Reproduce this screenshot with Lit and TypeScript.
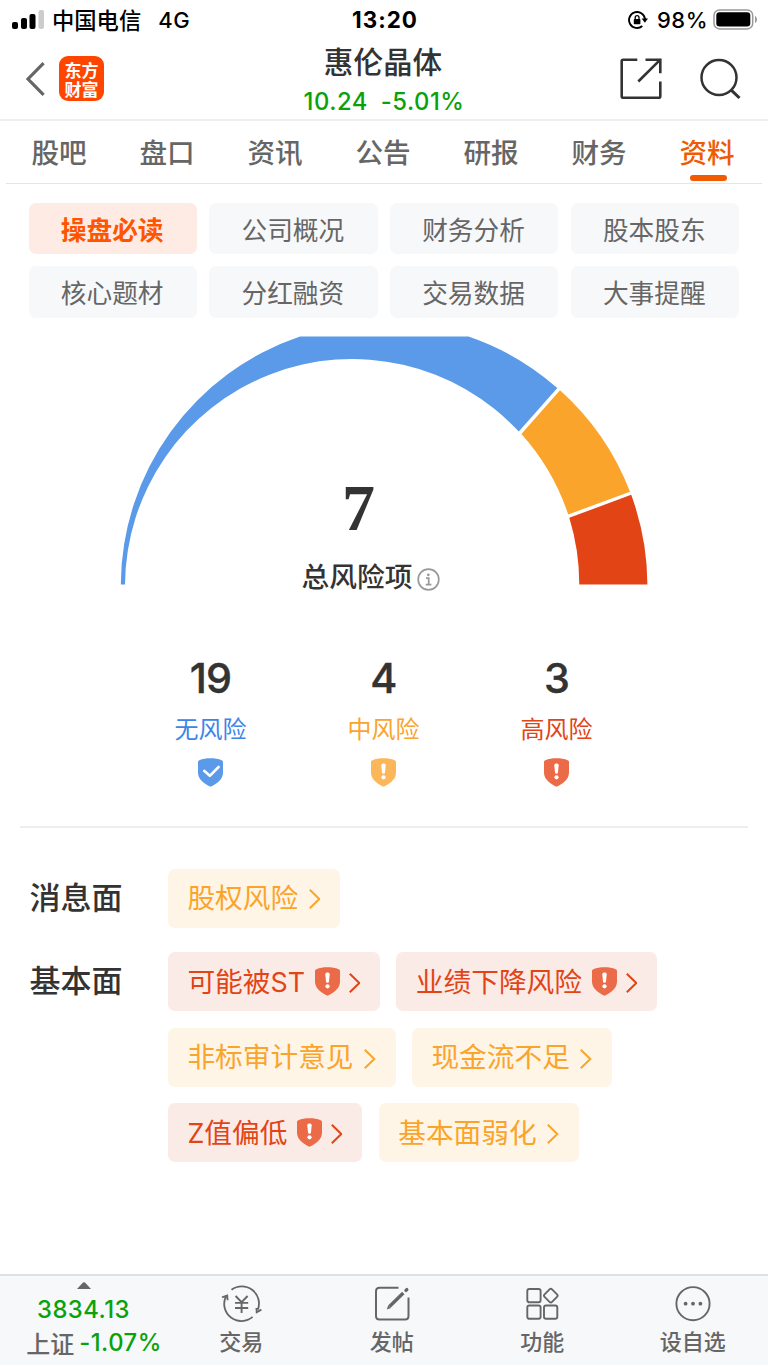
import { LitElement, html, css, svg } from "lit";
import { customElement, property } from "lit/decorators.js";
import { classMap } from "lit/directives/class-map.js";

type Level = "none" | "mid" | "high";

@customElement("risk-shield")
class RiskShield extends LitElement {
  @property() level: Level = "high";

  static styles = css`
    :host { display: block; width: 25px; height: 29px; }
    .icon { display: block; }
    .none { fill: #5b99e9; }
    .mid { fill: #fbb75a; }
    .high { fill: #eb6a47; }
    .tick { fill: none; stroke: #fff; stroke-width: 2.6; stroke-linecap: round; stroke-linejoin: round; }
    .mark { fill: #fff; }
  `;

  render() {
    return html`<svg class="icon" width="25" height="29" viewBox="0 0 25 29">
      <path class=${this.level} d="M12.5 0.3C16.6 0.3 20.6 0.9 23.6 2.2C24.5 2.6 25 3.2 25 4V14.5C25 20.8 19.6 25.4 12.5 28.8C5.4 25.4 0 20.8 0 14.5V4C0 3.2 .5 2.6 1.4 2.2C4.4 .9 8.4 .3 12.5 .3Z"/>
      ${this.level === "none"
        ? svg`<path class="tick" d="M6.2 12.8L11.8 17.8L20.6 9"/>`
        : svg`<path class="mark" d="M10.3 7.3C10.3 4.9 14.7 4.9 14.7 7.3L14 14.4C13.8 16.3 11.2 16.3 11 14.4Z"/><circle class="mark" cx="12.5" cy="19.3" r="2.1"/>`}
    </svg>`;
  }
}

@customElement("risk-tag")
class RiskTag extends LitElement {
  @property() label = "";
  @property() level: Level = "mid";

  static styles = css`
    :host { display: block; }
    .tag { display: flex; align-items: center; height: 59px; padding: 0 20px 0 19.4px; box-sizing: border-box; border-radius: 7px;
      font: 400 27.7px/40px "Inter", "Noto Sans CJK SC", sans-serif; white-space: nowrap; }
    .mid { background: #fef5e7; color: #fba42b; }
    .high { background: #fbebe7; color: #e24416; }
    .latin { font-size: 26.8px; }
    .shield { margin-left: 9.6px; }
    .arrow { display: block; margin: 2.5px 0 0 10.6px; fill: none; stroke: currentColor; stroke-width: 2; }
    .high .arrow { margin-left: 9px; }
  `;

  render() {
    const parts = this.label.split(/([A-Z]+)/).filter(Boolean);
    return html`<div class="tag ${this.level}">
      <span class="text">${parts.map((p) => (/[A-Z]/.test(p) ? html`<span class="latin">${p}</span>` : p))}</span>
      ${this.level === "high" ? html`<risk-shield class="shield" level="high"></risk-shield>` : ""}
      <svg class="arrow" width="11.5" height="20" viewBox="0 0 11.5 20"><path d="M.8 .8L10.3 10L.8 19.2"/></svg>
    </div>`;
  }
}

@customElement("app-root")
class AppRoot extends LitElement {
  private tabs = ["股吧", "盘口", "资讯", "公告", "研报", "财务", "资料"];
  private chips = ["操盘必读", "公司概况", "财务分析", "股本股东", "核心题材", "分红融资", "交易数据", "大事提醒"];
  private stats: { count: number; label: string; level: Level }[] = [
    { count: 19, label: "无风险", level: "none" },
    { count: 4, label: "中风险", level: "mid" },
    { count: 3, label: "高风险", level: "high" },
  ];
  private groups: { name: string; tags: [string, Level][] }[] = [
    { name: "消息面", tags: [["股权风险", "mid"]] },
    {
      name: "基本面",
      tags: [["可能被ST", "high"], ["业绩下降风险", "high"], ["非标审计意见", "mid"], ["现金流不足", "mid"], ["Z值偏低", "high"], ["基本面弱化", "mid"]],
    },
  ];

  static styles = css`
    :host { display: flex; flex-direction: column; width: 768px; height: 1366px; box-sizing: border-box; padding-bottom: 1px; overflow: hidden;
      background: #fff; color: #333; font-family: "Noto Sans CJK SC", sans-serif; }
    svg { display: block; flex: none; }
    .line { fill: none; stroke: currentColor; }
    .num { font-family: "Inter", sans-serif; }

    .status { display: grid; grid-template-columns: 1fr auto 1fr; align-items: center; height: 40px; padding: 0 10px 1px 12px; box-sizing: border-box; color: #000; }
    .carrier { display: flex; align-items: center; font-size: 22.3px; font-weight: 500; line-height: 38px; }
    .carrier-name { margin: -1px 0 0 8px; }
    .network { margin-left: 17px; font-size: 22px; letter-spacing: .6px; }
    .clock { font-size: 22.4px; font-weight: 700; letter-spacing: 1px; }
    .power { display: flex; align-items: center; justify-content: flex-end; font-size: 22px; font-weight: 500; }
    .percent { margin: 0 5px 0 9px; letter-spacing: .5px; }
    .battery-case { fill: none; stroke: #999; stroke-width: 1.5; }

    .header { display: grid; grid-template-columns: 1fr auto 1fr; height: 81px; box-sizing: border-box; border-bottom: 2px solid #eee; }
    .left { display: flex; align-items: center; padding: 0 0 3px 26px; }
    .back { color: #666; }
    .logo { display: flex; align-items: center; width: 45px; height: 45px; box-sizing: border-box; padding: 0 5px 0 5.5px; margin-left: 14px; border-radius: 9px;
      background: #ff4600; color: #fff; font-size: 17px; font-weight: 700; line-height: 19px; word-break: break-all; }
    .title { display: flex; flex-direction: column; align-items: center; }
    .name { margin-right: 2px; font-size: 29.6px; font-weight: 500; line-height: 42px; }
    .quote { display: flex; gap: 13px; margin-top: 2px; color: #0aa20a; font-size: 23.8px; font-weight: 500; line-height: 36px; letter-spacing: .5px; }
    .actions { display: flex; align-items: center; justify-content: flex-end; gap: 38px; padding: 0 27.5px 3px 0; }

    .tabs { display: grid; grid-template-columns: repeat(7, 108px); height: 63px; margin: 0 6px; box-sizing: border-box; border-bottom: 1px solid #e5e5e5; }
    .tab { display: flex; flex-direction: column; align-items: center; color: #666; font-size: 27.6px; font-weight: 500; line-height: 60px; height: 61px; }
    .tab-text { margin-right: 2px; }
    .tab.on { color: #f05a00; }
    .tab.on::after { content: ""; flex: none; width: 37px; height: 6px; margin-top: -6.5px; border-radius: 3px; background: #f05a00; }

    .chips { display: grid; grid-template-columns: repeat(4, 168.4px); gap: 12px 12.3px; padding: 18.5px 28.5px 0; }
    .chip { height: 51.6px; box-sizing: border-box; padding-right: 1px; border-radius: 7px; background: #f7f8fa; color: #666; font-size: 25.7px; line-height: 51.2px; text-align: center; }
    .chip.on { background: #feece4; color: #ff5500; font-weight: 700; }

    .gauge { display: grid; height: 250px; margin-top: 18px; }
    .dial, .total { grid-area: 1 / 1; }
    .total { display: flex; flex-direction: column; align-items: center; }
    .sum { margin-top: 134px; margin-right: 51px; font: 700 66px/76px "Liberation Serif", serif; }
    .caption { display: flex; align-items: center; gap: 5px; margin: 10px 26px 0 0; font-size: 27.7px; font-weight: 500; line-height: 38px; }
    .info { color: #999; margin-top: 9px; }

    .stats { display: grid; grid-template-columns: repeat(3, 173px); justify-content: center; height: 242px; margin: 0 20px; box-sizing: border-box; border-bottom: 2px solid #eee; padding-top: 66px; }
    .stat { display: flex; flex-direction: column; align-items: center; padding-right: 1px; }
    .count { font-size: 41.3px; font-weight: 500; line-height: 52px; letter-spacing: -.8px; -webkit-text-stroke: .4px #333; }
    .label { margin: 6px 0 12px; font-size: 24px; line-height: 36px; }
    .label.none { color: #3d85e6; }
    .label.mid { color: #fba42b; }
    .label.high { color: #e24416; }

    .groups { display: flex; flex-direction: column; gap: 24.5px; flex: 1; padding: 41px 30px 0 29.5px; }
    .group { display: grid; grid-template-columns: 138.5px 1fr; }
    .group-name { font-size: 31px; font-weight: 500; line-height: 54px; }
    .tags { display: flex; flex-wrap: wrap; gap: 16.6px 16.4px; padding-right: 40px; }

    .footer { display: grid; grid-template-columns: 166px repeat(4, 1fr); height: 91px; box-sizing: border-box; border-top: 2px solid #dde1e6; background: #f7f8fa; color: #666; }
    .index { display: flex; flex-direction: column; align-items: center; padding: 6px 0 0 1px; }
    .point { margin-top: 5px; color: #0aa20a; font-size: 23.8px; font-weight: 500; line-height: 32px; letter-spacing: .5px; }
    .change { display: flex; align-items: center; gap: 5px; margin-left: 21px; font-size: 24px; line-height: 33px; white-space: nowrap; }
    .market { font-weight: 500; margin-top: -1px; }
    .down { color: #0aa20a; font-size: 23.8px; font-weight: 500; letter-spacing: .5px; }
    .action { display: flex; flex-direction: column; align-items: center; padding-top: 8px; font-size: 22px; font-weight: 500; line-height: 33px; }
  `;

  private statusBar() {
    return html`<div class="status">
      <div class="carrier">
        <svg width="32" height="20" viewBox="0 0 32 20">
          <rect x="0" y="12" width="6" height="7" rx="2"/><rect x="9" y="8" width="6" height="11" rx="2"/>
          <rect x="17.5" y="4" width="6" height="15" rx="2"/><rect x="26.5" y="0" width="5.5" height="19" rx="2" fill="#ccc"/>
        </svg>
        <span class="carrier-name">中国电信</span><span class="network num">4G</span>
      </div>
      <div class="clock num">13:20</div>
      <div class="power num">
        <svg width="20" height="18" viewBox="0 0 20 18">
          <path class="line" stroke-width="1.9" d="M14.3 15A8 8 0 1 1 17 8"/>
          <path d="M13.6 7.4H20L16.9 11.8Z"/><rect x="5.8" y="8" width="6.6" height="5.2" rx=".8"/>
          <path class="line" stroke-width="1.3" d="M7.2 8V6.6A1.9 1.9 0 0 1 11 6.6V8"/>
        </svg>
        <span class="percent">98%</span>
        <svg width="45" height="21" viewBox="0 0 45 21">
          <rect class="battery-case" x="1" y=".9" width="38.7" height="19" rx="5.5"/>
          <rect x="3.3" y="3.2" width="34" height="14.3" rx="3.2"/><path d="M42 7C44.6 8 44.6 13 42 14Z" fill="#999"/>
        </svg>
      </div>
    </div>`;
  }

  private header() {
    return html`<div class="header">
      <div class="left">
        <svg class="back" width="19" height="34" viewBox="0 0 19 34"><path class="line" stroke-width="3.2" d="M17.6 1.2L2 17L17.6 32.8"/></svg>
        <div class="logo">东方财富</div>
      </div>
      <div class="title">
        <div class="name">惠伦晶体</div>
        <div class="quote num"><span>10.24</span><span>-5.01%</span></div>
      </div>
      <div class="actions">
        <svg width="42" height="42" viewBox="0 0 42 42">
          <path class="line" stroke-width="2.6" d="M17.3 1.7H3.2Q1.7 1.7 1.7 3.2V38.3Q1.7 39.8 3.2 39.8H38.8Q40.3 39.8 40.3 38.3V23.5M40.3 15.3V1.7H25.5M40.3 1.7L18.3 23.5"/>
        </svg>
        <svg width="41" height="42" viewBox="0 0 41 42">
          <circle class="line" cx="19" cy="19.5" r="17.5" stroke-width="2.5"/><path class="line" stroke-width="3" d="M31 31.8L39.5 40"/>
        </svg>
      </div>
    </div>`;
  }

  private gauge() {
    return html`<div class="gauge">
      <svg class="dial" width="768" height="250" viewBox="0 336 768 250">
        <path fill="#5b99e9" d="M120.8 584.5A263.2 263.2 0 0 1 300 336.5H468.5A263.2 263.2 0 0 1 557.3 388L518.8 431.6A227.3 227.3 0 0 0 125 584.5Z"/>
        <path fill="#fba42b" d="M560 390.3A263.2 263.2 0 0 1 630 491.8L568.2 514.5A227.3 227.3 0 0 0 521.4 434Z"/>
        <path fill="#e24416" d="M631.2 494.8A263.2 263.2 0 0 1 647.4 584.5H579.3A227.3 227.3 0 0 0 569.3 517.8Z"/>
      </svg>
      <div class="total">
        <div class="sum">7</div>
        <div class="caption">
          <span>总风险项</span>
          <svg class="info" width="23" height="23" viewBox="0 0 23 23">
            <circle class="line" cx="11.5" cy="11.5" r="10.3" stroke-width="1.7"/>
            <circle cx="11.3" cy="6.8" r="1.4" fill="currentColor"/>
            <path class="line" stroke-width="1.7" d="M9 10.2H11.7V16.6M8.8 16.7H14.4"/>
          </svg>
        </div>
      </div>
    </div>`;
  }

  private footer() {
    return html`<div class="footer">
      <div class="index">
        <svg width="14" height="7" viewBox="0 0 14 7"><path fill="#666" d="M0 7L6 .6Q7 -.2 8 .6L14 7Z"/></svg>
        <div class="point num">3834.13</div>
        <div class="change"><span class="market">上证</span><span class="down num">-1.07%</span></div>
      </div>
      <div class="action">
        <svg width="42" height="40" viewBox="0 0 42 40">
          <path class="line" stroke-width="1.8" d="M11.5 5.8A17.2 17.2 0 0 1 37.9 25.6M32.6 32.9A17.2 17.2 0 0 1 5.8 12.6M2 13.3L7.2 11.4L7.6 16.2M41.4 25.6L36.7 28.2L36.4 24"/>
          <path class="line" stroke-width="1.9" d="M15.6 12L21.6 18.2L27.6 12M21.6 18.2V29M15 18.9H28.2M15 24H28.2"/>
        </svg>
        <span>交易</span>
      </div>
      <div class="action">
        <svg width="36" height="40" viewBox="0 0 36 40">
          <path class="line" stroke-width="2" d="M24.5 3.8H5.5Q2 3.8 2 7.3V32Q2 35.5 5.5 35.5H31Q34.5 35.5 34.5 32V13.5"/>
          <path class="line" stroke-width="3.4" d="M15.5 22.5L29.3 9"/><path fill="currentColor" d="M12.8 25.4L14.2 21.2L17 23.9Z"/>
          <path class="line" stroke-width="3.4" stroke-linecap="round" d="M32 6.4L32.8 5.6"/>
        </svg>
        <span>发帖</span>
      </div>
      <div class="action">
        <svg width="33" height="40" viewBox="0 0 33 40">
          <g class="line" stroke-width="1.9">
            <rect x="1.3" y="5" width="13.3" height="13.3" rx="2"/><rect x="1.3" y="21.5" width="13.3" height="13.3" rx="2"/>
            <rect x="18" y="21.5" width="13.3" height="13.3" rx="2"/><rect x="19.5" y="6.3" width="10.6" height="10.6" rx="1.8" transform="rotate(45 24.8 11.6)"/>
          </g>
        </svg>
        <span>功能</span>
      </div>
      <div class="action">
        <svg width="36" height="40" viewBox="0 0 36 40">
          <circle class="line" cx="18" cy="19.7" r="16.6" stroke-width="1.9"/>
          <g fill="currentColor"><circle cx="10.6" cy="19.7" r="1.9"/><circle cx="18" cy="19.7" r="1.9"/><circle cx="25.4" cy="19.7" r="1.9"/></g>
        </svg>
        <span>设自选</span>
      </div>
    </div>`;
  }

  render() {
    return html`
      ${this.statusBar()} ${this.header()}
      <div class="tabs">${this.tabs.map((t) => html`<div class=${classMap({ tab: true, on: t === "资料" })}><span class="tab-text">${t}</span></div>`)}</div>
      <div class="chips">${this.chips.map((c, i) => html`<div class=${classMap({ chip: true, on: i === 0 })}>${c}</div>`)}</div>
      ${this.gauge()}
      <div class="stats">
        ${this.stats.map((s) => html`<div class="stat">
          <div class="count num">${s.count}</div>
          <div class="label ${s.level}">${s.label}</div>
          <risk-shield level=${s.level}></risk-shield>
        </div>`)}
      </div>
      <div class="groups">
        ${this.groups.map((g) => html`<div class="group">
          <div class="group-name">${g.name}</div>
          <div class="tags">${g.tags.map(([label, level]) => html`<risk-tag label=${label} level=${level}></risk-tag>`)}</div>
        </div>`)}
      </div>
      ${this.footer()}
    `;
  }
}
